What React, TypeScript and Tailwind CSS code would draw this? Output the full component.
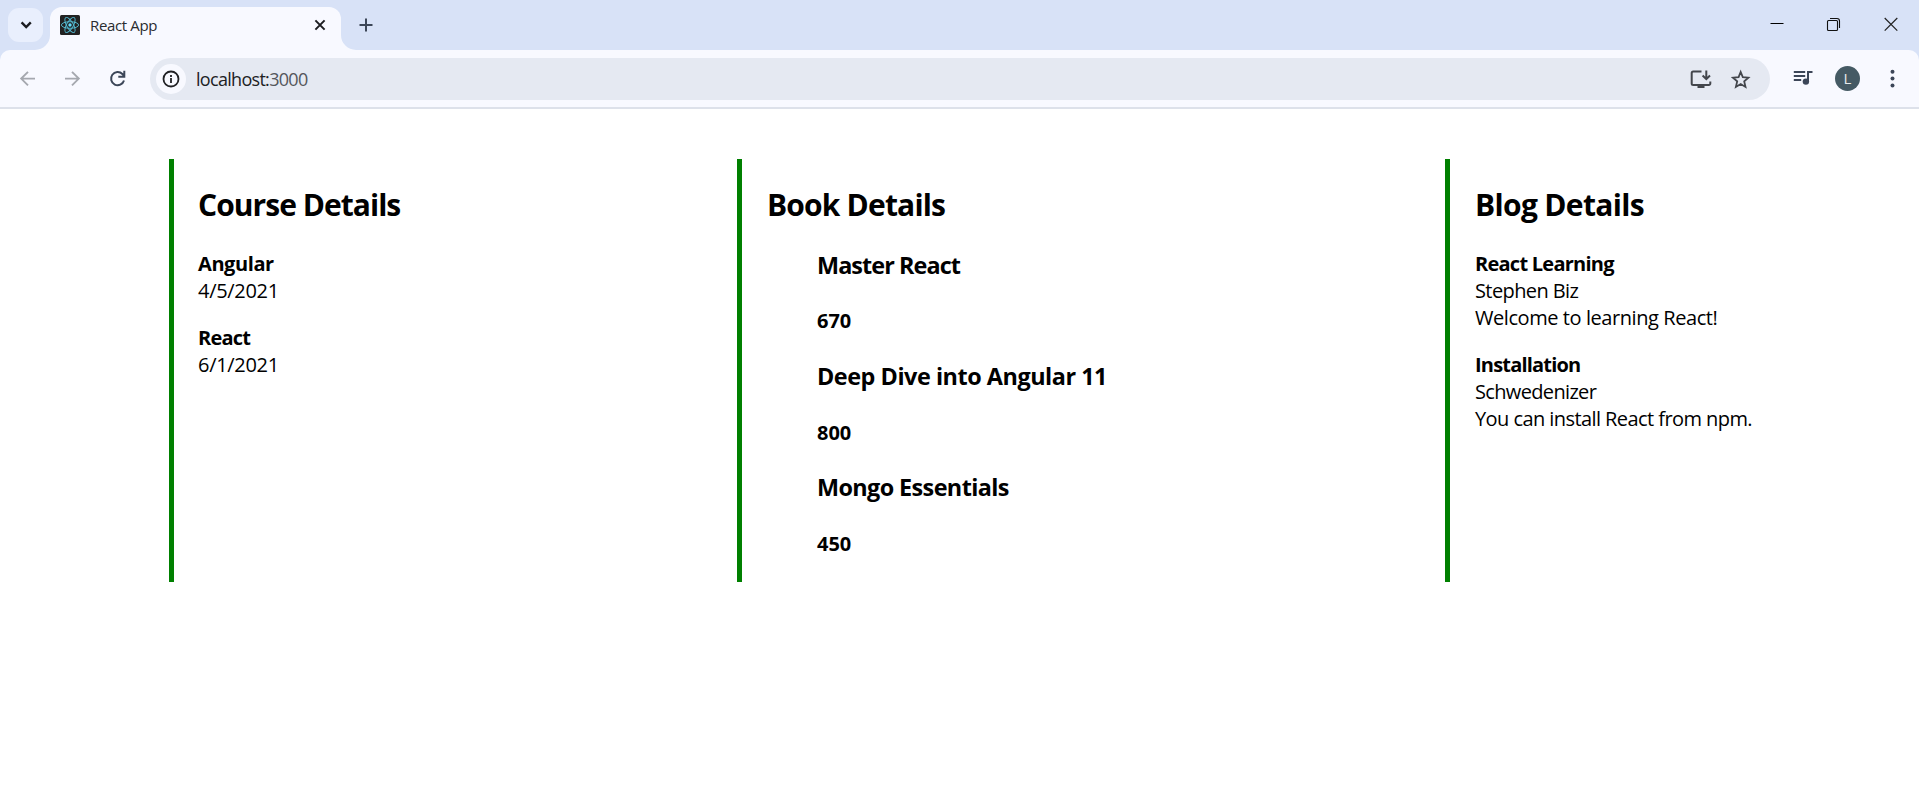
import React from "react";

const courses = [
  { name: "Angular", date: "4/5/2021", nameCls: "tracking-[-0.42px]", dateCls: "tracking-[-0.3px]" },
  { name: "React", date: "6/1/2021", nameCls: "tracking-[-0.8px]", dateCls: "tracking-[-0.3px]" },
];

const books = [
  { name: "Master React", price: "670", nameCls: "tracking-[-0.92px]" },
  { name: "Deep Dive into Angular 11", price: "800", nameCls: "tracking-[-0.46px]" },
  { name: "Mongo Essentials", price: "450", nameCls: "tracking-[-0.6px]" },
];

const blogs = [
  {
    title: "React Learning",
    author: "Stephen Biz",
    text: "Welcome to learning React!",
    titleCls: "tracking-[-0.75px]",
    authorCls: "tracking-[-0.6px]",
    textCls: "tracking-[-0.43px]",
  },
  {
    title: "Installation",
    author: "Schwedenizer",
    text: "You can install React from npm.",
    titleCls: "tracking-[-0.8px]",
    authorCls: "tracking-[-0.66px]",
    textCls: "tracking-[-0.57px]",
  },
];

function ReactMark() {
  return (
    <svg className="h-5 w-5" viewBox="0 0 20 20" fill="none">
      <rect width="20" height="20" rx="1.5" fill="#222222" />
      <g stroke="#53b9d0" strokeWidth="0.95">
        <ellipse cx="10" cy="10" rx="8.6" ry="3.3" />
        <ellipse cx="10" cy="10" rx="8.6" ry="3.3" transform="rotate(60 10 10)" />
        <ellipse cx="10" cy="10" rx="8.6" ry="3.3" transform="rotate(120 10 10)" />
      </g>
      <circle cx="10" cy="10" r="1.7" fill="#61dafb" />
    </svg>
  );
}

function TabStrip() {
  return (
    <div className="flex h-[50px] bg-[#d8e2f7]">
      <div className="flex w-[50px] flex-none flex-col">
        <div className="mt-2 ml-2 flex h-[34px] w-[35px] flex-none items-center justify-center rounded-[11px] bg-[#e9effd]">
          <svg className="h-5 w-5" viewBox="0 0 20 20" fill="none" stroke="#1b1c20" strokeWidth="2.4">
            <path d="M5.6 7.4 10.2 12l4.600-4.600" />
          </svg>
        </div>
        <svg className="-mt-[7px] ml-auto h-[15px] w-[15px] flex-none" viewBox="0 0 12 12">
          <path d="M12 0v12H0A12 12 0 0 0 12 0Z" fill="#f8f9ff" />
        </svg>
      </div>
      <div className="mt-[7px] flex w-[291px] flex-none items-center rounded-t-xl bg-[#f8f9ff] pb-2 pl-[10px]">
        <ReactMark />
        <span className="ml-[10px] text-[15px] leading-5 tracking-[-0.35px] text-[#2a2c30]">React App</span>
        <svg className="mr-[15px] ml-auto h-3 w-3" viewBox="0 0 12 12" stroke="#1b1c20" strokeWidth="2">
          <path d="m1.400 1.400 9.200 9.200M10.600 1.400 1.400 10.600" />
        </svg>
      </div>
      <svg className="mt-auto h-[15px] w-[15px] flex-none" viewBox="0 0 12 12">
        <path d="M0 0v12h12A12 12 0 0 1 0 0Z" fill="#f8f9ff" />
      </svg>
      <svg className="mt-[18px] ml-[3px] h-[14px] w-[14px]" viewBox="0 0 14 14" stroke="#3c4658" strokeWidth="2">
        <path d="M7 .5v13M.5 7h13" />
      </svg>
      <div className="ml-auto flex items-start">
        <svg className="mt-[17px] mr-[42px] h-[14px] w-[14px]" viewBox="0 0 14 14" stroke="#000" strokeWidth="1">
          <path d="M.5 6.500h13" />
        </svg>
        <svg className="mt-[17px] mr-[43px] h-[15px] w-[15px]" viewBox="0 0 15 15" fill="none" stroke="#111" strokeWidth="1.100">
          <rect x="1.500" y="3.500" width="10" height="10" rx="1" />
          <path d="M4 1.500h7a2.500 2.500 0 0 1 2.500 2.500v7" />
        </svg>
        <svg className="mt-[17px] mr-[21px] h-[14px] w-[14px]" viewBox="0 0 14 14" stroke="#222" strokeWidth="1.200">
          <path d="m.7 1 12.600 12.600M13.300 1 .7 13.600" />
        </svg>
      </div>
    </div>
  );
}

function Toolbar() {
  return (
    <div className="bg-[#d8e2f7]">
      <div className="flex h-[59px] items-start rounded-t-[10px] border-b-2 border-[#dde1ea] bg-[#f8f9ff] pt-2">
        <svg className="mt-[12px] ml-[19px] h-[18px] w-[18px] flex-none" viewBox="0 0 18 18" fill="none" stroke="#a5a8af" strokeWidth="1.900">
          <path d="M16 8.600H2.500M9 1.800 2.200 8.600 9 15.400" />
        </svg>
        <svg className="mt-[12px] ml-[26px] h-[18px] w-[18px] flex-none" viewBox="0 0 18 18" fill="none" stroke="#a5a8af" strokeWidth="1.900">
          <path d="M2 8.600h13.500M9 1.800l6.800 6.800L9 15.400" />
        </svg>
        <svg className="mt-[12px] ml-[28px] h-[18px] w-[18px] flex-none" viewBox="0 0 18 18" fill="none" stroke="#3c4658" strokeWidth="2">
          <path d="M15 10.500A6.600 6.600 0 1 1 13.400 4l1.800 2M15.300.8v6H9.300" />
        </svg>
        <div className="ml-[23px] flex h-[42px] w-[1620px] flex-none items-center rounded-full bg-[#e5e9f2] pl-[6px]">
          <div className="flex h-[30px] w-[30px] items-center justify-center rounded-full bg-[#f8f9ff]">
            <svg className="h-[18px] w-[18px]" viewBox="0 0 18 18" fill="none" stroke="#202124" strokeWidth="1.800">
              <circle cx="9" cy="9" r="7.500" />
              <path d="M9 8v5M9 5v1.900" />
            </svg>
          </div>
          <span className="ml-[10px] text-[18px] leading-6 tracking-[-0.7px] text-[#202124]">
            localhost:<span className="text-[#54565b]">3000</span>
          </span>
          <svg className="mr-[19px] ml-auto h-[20px] w-[22px]" viewBox="0 0 22 20" fill="none" stroke="#43464c" strokeWidth="2">
            <path d="M11.500 2.500H3.200a1.500 1.500 0 0 0-1.500 1.500v10.500A1.500 1.500 0 0 0 3.200 16h15.600a1.500 1.500 0 0 0 1.500-1.500v-2" />
            <path d="M16.300 1.500v8.500M12.600 6.500l3.700 3.700L20 6.500" />
            <path d="M7.500 17.500h7" strokeWidth="3" />
          </svg>
          <svg className="mr-[19px] h-5 w-5" viewBox="0 0 20 20" fill="none" stroke="#43464c" strokeWidth="1.800">
            <path d="m9.700 3 2.100 5.200 5.600.5-4.200 3.700 1.300 5.500-4.800-2.900-4.800 2.900 1.300-5.500-4.200-3.700 5.600-.5Z" />
          </svg>
        </div>
        <svg className="mt-[12px] ml-[23px] h-[16px] w-[20px] flex-none" viewBox="0 0 20 16" fill="none" stroke="#3c4658" strokeWidth="2">
          <path d="M.8 2h11.400M.8 6h11.400M.8 10h7.400M15 11.500V2h4.500" />
          <circle cx="12.900" cy="11.600" r="3.200" fill="#3c4658" stroke="none" />
        </svg>
        <div className="mt-2 ml-[22px] flex h-[25px] w-[25px] flex-none items-center justify-center rounded-full bg-[#455a64] text-[15px] leading-none text-[#e6eaec]">
          L
        </div>
        <svg className="mt-[11px] ml-[30px] h-[20px] w-[5px] flex-none" viewBox="0 0 5 20" fill="#3c4658">
          <circle cx="2.500" cy="2.700" r="2" />
          <circle cx="2.500" cy="9.500" r="2" />
          <circle cx="2.500" cy="16.400" r="2" />
        </svg>
      </div>
    </div>
  );
}

type ColumnProps = { title: string; className: string; titleCls: string; children: React.ReactNode };

function Column({ title, className, titleCls, children }: ColumnProps) {
  return (
    <section className={`h-[423px] flex-none border-l-[5px] border-[#008000] pt-[26px] pl-[25px] ${className}`}>
      <h1 className={`mb-[25px] text-[30px] leading-10 font-bold ${titleCls}`}>{title}</h1>
      {children}
    </section>
  );
}

export default function App() {
  return (
    <div className="h-[805px] w-full overflow-hidden bg-white font-['Open_Sans','Noto_Sans',sans-serif] whitespace-nowrap text-black">
      <TabStrip />
      <Toolbar />
      <main className="flex pt-[50px] pl-[169px] text-[20px] leading-[27px]">
        <Column title="Course Details" className="w-[568px]" titleCls="-ml-px tracking-[-0.96px]">
          <div className="-ml-px flex flex-col gap-5">
            {courses.map((c) => (
              <div key={c.name}>
                <h4 className={`font-bold ${c.nameCls}`}>{c.name}</h4>
                <p className={c.dateCls}>{c.date}</p>
              </div>
            ))}
          </div>
        </Column>
        <Column title="Book Details" className="w-[708px]" titleCls="tracking-[-0.82px]">
          <div className="-mt-[0.25px] flex flex-col gap-[26.6px] pl-[50px] font-bold">
            {books.map((b) => (
              <React.Fragment key={b.name}>
                <h3 className={`text-[23.4px] leading-[31px] ${b.nameCls}`}>{b.name}</h3>
                <h4>{b.price}</h4>
              </React.Fragment>
            ))}
          </div>
        </Column>
        <Column title="Blog Details" className="w-[474px]" titleCls="tracking-[-0.66px]">
          <div className="flex flex-col gap-5">
            {blogs.map((b) => (
              <div key={b.title}>
                <h4 className={`font-bold ${b.titleCls}`}>{b.title}</h4>
                <p className={b.authorCls}>{b.author}</p>
                <p className={b.textCls}>{b.text}</p>
              </div>
            ))}
          </div>
        </Column>
      </main>
    </div>
  );
}
